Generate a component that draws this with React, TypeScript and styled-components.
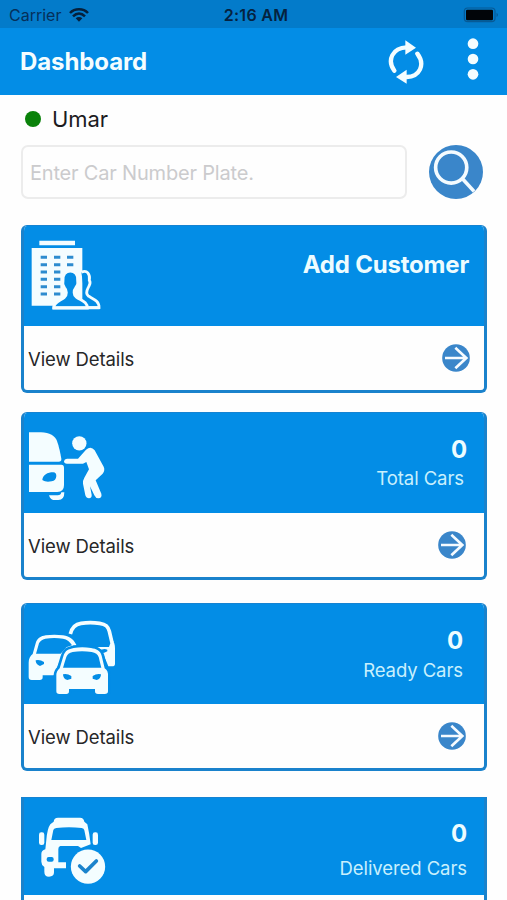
import React from "react";
import styled, { createGlobalStyle } from "styled-components";

const BLUE = "#038de6";
const STEEL = "#3a86ca";

const GlobalStyle = createGlobalStyle`
  *, *::before, *::after { box-sizing: border-box; }
  body {
    margin: 0;
    background: #fefefe;
    font-family: Inter, "Liberation Sans", sans-serif;
    overflow: hidden;
  }
  svg { display: block; flex: none; }
`;

const Screen = styled.div`
  width: 507px;
  height: 900px;
  overflow: hidden;
  display: flex;
  flex-direction: column;
`;

const StatusBar = styled.div`
  flex: none;
  height: 28px;
  padding: 1px 8px 0 9px;
  display: grid;
  grid-template-columns: 1fr auto 1fr;
  align-items: center;
  background: #037bca;
  color: #06233c;
`;

const Carrier = styled.div`
  display: flex;
  align-items: center;
  gap: 8px;
  font-size: 16px;
  color: #05305a;
`;

const Clock = styled.div`
  font-size: 16px;
  font-weight: 600;
  letter-spacing: 0.3px;
  color: #052240;
  padding-left: 4px;
`;

const BatterySlot = styled.div`
  justify-self: end;
`;

const TopBar = styled.header`
  flex: none;
  height: 67px;
  padding: 0 28px 0 20px;
  display: flex;
  align-items: center;
  background: ${BLUE};
`;

const Title = styled.h1`
  margin: 0;
  flex: 1;
  font-size: 24px;
  font-weight: 700;
  line-height: 30px;
  letter-spacing: -0.1px;
  color: #f4fdff;
`;

const TopAction = styled.button<{ $gap?: number; $lift?: number }>`
  border: 0;
  padding: 0 0 ${(p) => p.$lift ?? 0}px;
  background: none;
  margin-left: ${(p) => p.$gap ?? 0}px;
`;

const UserRow = styled.div`
  flex: none;
  height: 50px;
  padding: 0 0 2px 25px;
  display: flex;
  align-items: center;
  gap: 11px;
  font-size: 22px;
  letter-spacing: -0.1px;
  color: #1c1c1e;
`;

const OnlineDot = styled.span`
  width: 16px;
  height: 16px;
  border-radius: 50%;
  background: #0a820a;
`;

const SearchRow = styled.div`
  flex: none;
  height: 54px;
  padding: 0 24px 0 21px;
  display: flex;
  justify-content: space-between;
`;

const PlateInput = styled.input`
  width: 386px;
  height: 54px;
  padding: 1px 8px 0 7px;
  border: 2px solid #ececec;
  border-radius: 7px;
  background: #fefefe;
  font: 400 20px Inter, "Liberation Sans", sans-serif;
  letter-spacing: -0.19px;
  outline: 0;
  &::placeholder { color: #cbcbcd; opacity: 1; }
`;

const SearchButton = styled.button`
  width: 54px;
  height: 54px;
  border: 0;
  padding: 0;
  background: none;
`;

const CardList = styled.main`
  padding: 26px 20px 0 21px;
`;

const Card = styled.section<{ $gap: number; $square?: boolean }>`
  height: 168px;
  margin-bottom: ${(p) => p.$gap}px;
  display: flex;
  flex-direction: column;
  overflow: hidden;
  border: 3px solid #1a82cc;
  border-top: 1px solid #1583d2;
  border-radius: ${(p) => (p.$square ? 0 : 6)}px;
  background: #fefefe;
`;

const CardHead = styled.div<{ $height: number }>`
  flex: none;
  height: ${(p) => p.$height}px;
  margin: 0 -2px;
  display: flex;
  justify-content: space-between;
  background: ${BLUE};
`;

const CardIcon = styled.div<{ $top: number; $left: number }>`
  padding: ${(p) => p.$top}px 0 0 ${(p) => p.$left}px;
`;

const Figures = styled.div<{ $top: number }>`
  padding-top: ${(p) => p.$top}px;
  display: flex;
  flex-direction: column;
  align-items: flex-end;
`;

const Headline = styled.div<{ $right: number }>`
  padding-right: ${(p) => p.$right}px;
  font-size: 24px;
  font-weight: 700;
  line-height: 30px;
  letter-spacing: -0.2px;
  color: #edfcff;
`;

const Caption = styled.div<{ $right: number; $top: number }>`
  margin-top: ${(p) => p.$top}px;
  padding-right: ${(p) => p.$right}px;
  font-size: 18.5px;
  line-height: 24px;
  letter-spacing: -0.08px;
  color: #c9f0fd;
`;

const CardFoot = styled.div<{ $right: number }>`
  flex: 1;
  padding: 0 ${(p) => p.$right}px 0 4px;
  display: flex;
  align-items: center;
  justify-content: space-between;
`;

const FootLabel = styled.span`
  padding-top: 2px;
  font-size: 18.5px;
  letter-spacing: -0.1px;
  color: #262628;
`;

const WifiIcon = () => (
  <svg width="20" height="14" viewBox="206 22 60 42" fill="none" stroke="#05203c" strokeWidth="7.5">
    <path d="M209 37C223 22 249 22 263 37M218 47C229 36 243 36 254 47" />
    <path d="M236 63l-10-10c6-5 14-5 20 0z" fill="#05203c" stroke="none" />
  </svg>
);

const BatteryIcon = () => (
  <svg width="36" height="16" viewBox="629 19 108 48">
    <rect x="633" y="22" width="92" height="41" rx="10" fill="none" stroke="#075a96" strokeWidth="3.5" />
    <rect x="638" y="27" width="81" height="32" rx="4" fill="#010509" />
    <path d="M730 36q6 6 0 13z" fill="#064c82" />
  </svg>
);

const RefreshIcon = () => (
  <svg width="36" height="44" viewBox="402 118 108 132" fill="none" stroke="#f4fdff" strokeWidth="13" strokeLinecap="round">
    <path d="M421 210C398 178 416 141 458 140M490 159C515 192 497 228 458 229" />
    <path d="M454 119L486 141L454 162zM458 207L426 229L458 249z" fill="#f4fdff" stroke="none" />
  </svg>
);

const MoreIcon = () => (
  <svg width="12" height="42" viewBox="640 113 36 126" fill="#f4fdff">
    <circle cx="658" cy="130" r="16" />
    <circle cx="658" cy="176" r="16" />
    <circle cx="658" cy="222" r="16" />
  </svg>
);

const SearchIcon = () => (
  <svg width="54" height="54" viewBox="524 149 163 163" fill="none" stroke="#f4fbff" strokeWidth="11">
    <circle cx="605.5" cy="230.5" r="81.5" fill={STEEL} stroke="none" />
    <circle cx="591" cy="217" r="47" />
    <path d="M625 251L660 289" />
  </svg>
);

const ArrowIcon = () => (
  <svg width="28" height="28" viewBox="0 0 84 84" fill="none" stroke="#f6fbff" strokeWidth="8" strokeLinecap="square">
    <circle cx="42" cy="42" r="41.5" fill={STEEL} stroke="none" />
    <path d="M13 42H70M43 14L73 42L43 70" />
  </svg>
);

const CustomerIcon = () => (
  <svg width="72" height="72" viewBox="60 69 216 216">
    <path d="M88 77H195V91H88zM65 99H217V272H65z" fill="#f4fdff" />
    <path
      d="M92 127h19M132 127h19M171 127h19M92 149h19M132 149h19M171 149h19M92 171h19M132 171h19M92 193h19M132 193h19M92 215h19M132 215h19M92 237h19M132 237h19"
      stroke="#2d8ccf"
      strokeWidth="9"
    />
    <path
      d="M214 172C231 163 241 177 238 196C244 204 238 211 235 217C230 226 227 236 235 243C250 252 268 258 267 278H230"
      fill={BLUE}
      stroke="#f4fdff"
      strokeWidth="8.5"
    />
    <path
      d="M131 279C130 262 152 257 163 247C172 240 170 225 164 219C160 212 156 207 159 199C153 158 209 158 203 199C206 207 201 213 197 219C191 226 190 240 199 246C214 257 232 260 232 279z"
      fill={BLUE}
      stroke="#f4fdff"
      strokeWidth="8.5"
    />
    <path d="M128 278H269" stroke="#f4fdff" strokeWidth="9" />
  </svg>
);

const TotalIcon = () => (
  <svg width="78" height="70" viewBox="54 93 234 210" fill="#f4fdff">
    <path d="M57 97H93C119 97 135 108 141 123C147 139 151 159 154 176Q155 185 146 185H57z" />
    <path d="M57 194H154Q162 194 162 203V255Q162 276 142 276H57z" />
    <path d="M97 239C99 225 112 217 130 217Q139 218 139 228Q138 242 125 244Q107 247 98 241z" fill={BLUE} />
    <path d="M117 286H143Q153 286 154 277H163Q163 300 145 300H130Q121 299 117 286z" />
    <circle cx="208" cy="130" r="21.5" />
    <path d="M228 149Q243 137 254 151L281 200Q286 211 278 221L257 241L274 281Q277 294 265 295Q257 295 253 286L240 259L245 284Q246 294 237 295Q229 295 226 286L219 251Q218 241 223 233L237 208L229 186L219 191H171Q162 190 162 183.5Q163 176 171 176H204z" />
  </svg>
);

const carPath =
  "M140 304V259C139 248 144 241 150 235L161 199C166 181 177 177 192 174Q218 170 244 174C261 177 271 181 276 197L285 235C293 241 296 248 295 259V304Q295 312 285 312H265Q256 312 256 304V297H178V304Q178 312 170 312H149Q140 312 140 304z";

const ReadyIcon = () => (
  <svg width="90" height="76" viewBox="52 90 270 228">
    <path
      d="M182 132C187 111 198 102 214 100Q242 96 270 100C289 103 295 110 299 124L307 158"
      fill="none"
      stroke="#f4fdff"
      strokeWidth="11"
    />
    <path d="M204 171H298L306 148C314 156 316 164 316 175V221Q316 229 307 229H296L275 178H204z" fill="#f4fdff" />
    <path d="M270 184Q280 174 293 179V184L282 189z" fill={BLUE} />
    <path
      d="M57 261V218C57 205 62 198 69 192L78 160C83 143 94 139 108 136Q134 132 160 136C181 139 194 148 203 172L160 192L132 256H99V262Q99 270 90 270H66Q57 270 57 261z"
      fill="#f4fdff"
    />
    <path d="M79 191L88 160Q93 149 107 146Q134 142 160 146Q178 149 187 166L170 172L153 191z" fill={BLUE} />
    <path d="M78 211Q91 208 103 216V222L91 228Q78 224 78 211z" fill={BLUE} />
    <path d={carPath} fill={BLUE} stroke={BLUE} strokeWidth="16" />
    <path d={carPath} fill="#f4fdff" />
    <path d="M160 233L170 201Q174 189 189 186Q217 182 246 186Q263 189 267 201L275 233z" fill={BLUE} />
    <path d="M160 253Q173 250 185 258V266L173 270Q160 267 160 253zM274 253Q261 250 249 258V266L261 270Q274 267 274 253z" fill={BLUE} />
  </svg>
);

const DeliveredIcon = () => (
  <svg width="70" height="70" viewBox="81 93 210 210" fill="#f4fdff">
    <rect x="87" y="142" width="16" height="38" rx="7" />
    <rect x="248" y="142" width="16" height="38" rx="7" />
    <path d="M131 110Q132 98 144 98H210Q221 98 223 110L232 118Q238 145 242 178L213 189L204 183H151Q145 184 145 192V232H168V250H132V262Q132 275 117 275Q103 275 103 260V246Q94 240 94 230V207Q94 196 106 193L109 165Q112 130 121 118z" />
    <path d="M124 165L130 135Q131 130 139 129Q177 124 215 129Q222 130 223 136L229 165z" fill={BLUE} />
    <rect x="110" y="216" width="21" height="14" rx="6" fill={BLUE} />
    <circle cx="234" cy="245" r="57" fill={BLUE} />
    <circle cx="234" cy="245" r="51.5" />
    <path d="M209 243L227 260L259 228" fill="none" stroke="#1b83cc" strokeWidth="11" strokeLinecap="round" strokeLinejoin="round" />
  </svg>
);

interface CardData {
  headline: string;
  caption?: string;
  icon: React.ReactNode;
  iconTop: number;
  iconLeft: number;
  textTop: number;
  headRight: number;
  capRight?: number;
  capTop?: number;
  headHeight: number;
  arrowRight?: number;
  gap: number;
  square?: boolean;
}

const cards: CardData[] = [
  { headline: "Add Customer", icon: <CustomerIcon />, iconTop: 12, iconLeft: 8, textTop: 24, headRight: 17, headHeight: 100, arrowRight: 14, gap: 19 },
  { headline: "0", caption: "Total Cars", icon: <TotalIcon />, iconTop: 18, iconLeft: 6, textTop: 22, headRight: 19, capRight: 22, capTop: 1, headHeight: 100, arrowRight: 18, gap: 23 },
  { headline: "0", caption: "Ready Cars", icon: <ReadyIcon />, iconTop: 16, iconLeft: 5, textTop: 22, headRight: 23, capRight: 23, capTop: 2, headHeight: 100, arrowRight: 18, gap: 26 },
  { headline: "0", caption: "Delivered Cars", icon: <DeliveredIcon />, iconTop: 18, iconLeft: 15, textTop: 21, headRight: 19, capRight: 19, capTop: 7, headHeight: 97, gap: 0, square: true },
];

export default function App() {
  return (
    <Screen>
      <GlobalStyle />
      <StatusBar>
        <Carrier>
          Carrier
          <WifiIcon />
        </Carrier>
        <Clock>2:16 AM</Clock>
        <BatterySlot>
          <BatteryIcon />
        </BatterySlot>
      </StatusBar>
      <TopBar>
        <Title>Dashboard</Title>
        <TopAction aria-label="Refresh">
          <RefreshIcon />
        </TopAction>
        <TopAction aria-label="More" $gap={43} $lift={5}>
          <MoreIcon />
        </TopAction>
      </TopBar>
      <UserRow>
        <OnlineDot />
        Umar
      </UserRow>
      <SearchRow>
        <PlateInput placeholder="Enter Car Number Plate." />
        <SearchButton aria-label="Search">
          <SearchIcon />
        </SearchButton>
      </SearchRow>
      <CardList>
        {cards.map((c) => (
          <Card key={c.caption ?? c.headline} $gap={c.gap} $square={c.square}>
            <CardHead $height={c.headHeight}>
              <CardIcon $top={c.iconTop} $left={c.iconLeft}>
                {c.icon}
              </CardIcon>
              <Figures $top={c.textTop}>
                <Headline $right={c.headRight}>{c.headline}</Headline>
                {c.caption && (
                  <Caption $right={c.capRight ?? 0} $top={c.capTop ?? 0}>
                    {c.caption}
                  </Caption>
                )}
              </Figures>
            </CardHead>
            {c.arrowRight !== undefined && (
              <CardFoot $right={c.arrowRight}>
                <FootLabel>View Details</FootLabel>
                <ArrowIcon />
              </CardFoot>
            )}
          </Card>
        ))}
      </CardList>
    </Screen>
  );
}
